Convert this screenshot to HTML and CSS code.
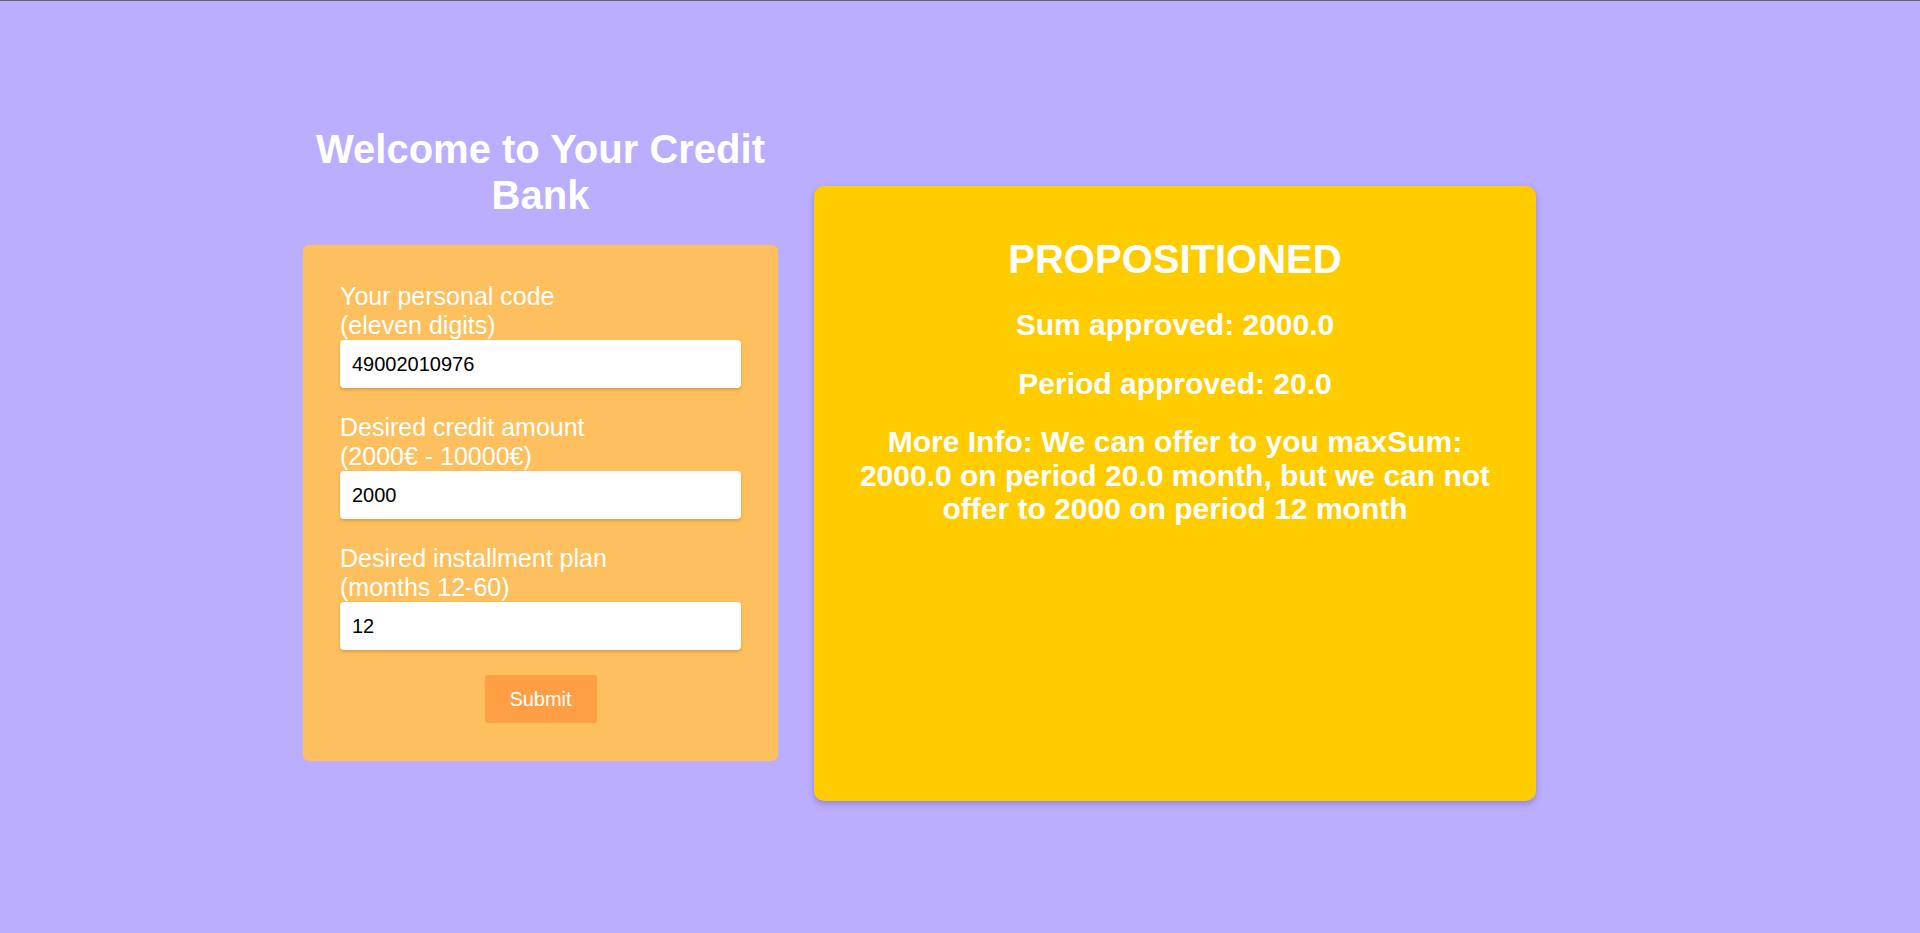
FILE: index.html
```html
<!DOCTYPE html>
<html lang="en">
<head>
<meta charset="utf-8">
<title>Your Credit Bank</title>
<link rel="stylesheet" href="styles.css">
</head>
<body>
<div class="topbar"></div>
<main class="page">
  <section class="left">
    <h1 class="title">Welcome to Your Credit Bank</h1>
    <form class="form-card">
      <div class="field">
        <label class="label" for="code">Your personal code<br>(eleven digits)</label>
        <input class="input" id="code" type="text" value="49002010976">
      </div>
      <div class="field">
        <label class="label" for="amount">Desired credit amount<br>(2000€ - 10000€)</label>
        <input class="input" id="amount" type="text" value="2000">
      </div>
      <div class="field">
        <label class="label" for="period">Desired installment plan<br>(months 12-60)</label>
        <input class="input" id="period" type="text" value="12">
      </div>
      <div class="actions">
        <button class="submit" type="button">Submit</button>
      </div>
    </form>
  </section>
  <section class="result">
    <h2 class="result-title">PROPOSITIONED</h2>
    <p class="result-line">Sum approved: 2000.0</p>
    <p class="result-line">Period approved: 20.0</p>
    <p class="result-line">More Info: We can offer to you maxSum: 2000.0 on period 20.0 month, but we can not offer to 2000 on period 12 month</p>
  </section>
</main>
</body>
</html>
```

FILE: styles.css
```css
html, body {
  margin: 0;
  padding: 0;
  height: 100%;
}

body {
  background: #bbaeff;
  font-family: "Liberation Sans", Arial, sans-serif;
  color: #ffffff;
  overflow: hidden;
}

.topbar {
  height: 1px;
  background: #636363;
}

.page {
  display: flex;
  align-items: flex-start;
  gap: 36px;
  padding: 125px 0 0 303px;
}

.left {
  width: 475px;
  display: flex;
  flex-direction: column;
}

.title {
  margin: 0 0 27px;
  font-size: 40px;
  line-height: 46px;
  font-weight: bold;
  text-align: center;
  color: #ffffff;
}

.form-card {
  background: #febf5e;
  border-radius: 6px;
  padding: 37px 37px 38px;
  display: flex;
  flex-direction: column;
  gap: 25px;
}

.field {
  display: flex;
  flex-direction: column;
}

.label {
  font-size: 25px;
  line-height: 29px;
  color: #ffffff;
}

.input {
  box-sizing: border-box;
  height: 48px;
  width: 100%;
  border: none;
  border-radius: 4px;
  background: #ffffff;
  padding: 0 12px;
  font-family: "Liberation Sans", Arial, sans-serif;
  font-size: 20px;
  color: #000000;
  box-shadow: 0 2px 3px rgba(120, 70, 0, 0.25);
  outline: none;
}

.actions {
  display: flex;
  justify-content: center;
}

.submit {
  width: 112px;
  height: 48px;
  border: none;
  border-radius: 3px;
  background: #ff9f45;
  color: #ffffff;
  font-family: "Liberation Sans", Arial, sans-serif;
  font-size: 20px;
  cursor: pointer;
}

.result {
  box-sizing: border-box;
  margin-top: 60px;
  width: 722px;
  height: 615px;
  background: #ffcc00;
  border-radius: 10px;
  box-shadow: 0 3px 6px rgba(60, 40, 120, 0.3);
  padding: 50px 40px 0;
  text-align: center;
  display: flex;
  flex-direction: column;
  gap: 25px;
}

.result-title {
  margin: 0 0 1px;
  font-size: 40px;
  line-height: 46px;
  font-weight: bold;
}

.result-line {
  margin: 0;
  font-size: 30px;
  line-height: 33.5px;
  font-weight: bold;
}
```
